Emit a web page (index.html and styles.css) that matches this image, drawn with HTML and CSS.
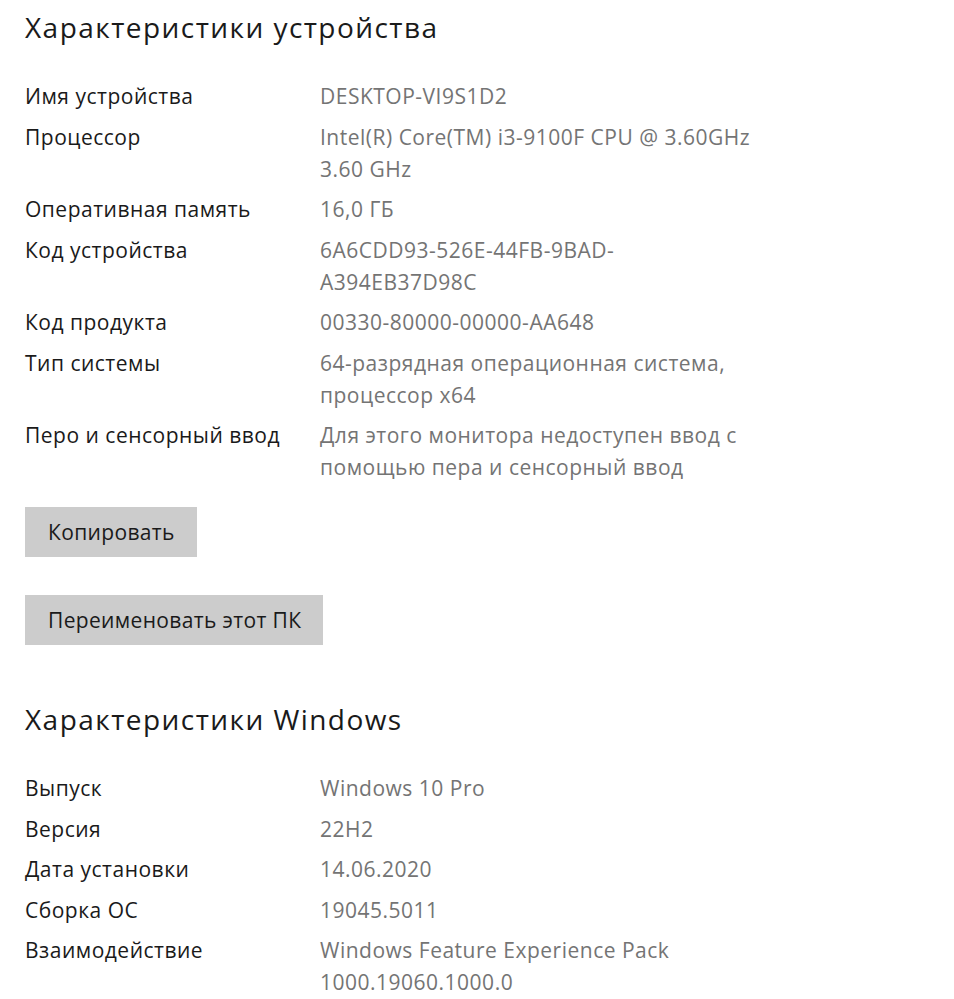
FILE: index.html
```html
<!DOCTYPE html>
<html lang="ru">
<head>
<meta charset="utf-8">
<title>О программе</title>
<link rel="stylesheet" href="styles.css">
</head>
<body>
<main class="page">
  <section class="section">
    <h1 class="title">Характеристики устройства</h1>
    <dl class="specs">
      <div class="row"><dt>Имя устройства</dt><dd>DESKTOP-VI9S1D2</dd></div>
      <div class="row"><dt>Процессор</dt><dd>Intel(R) Core(TM) i3-9100F CPU @ 3.60GHz<br>3.60 GHz</dd></div>
      <div class="row"><dt>Оперативная память</dt><dd>16,0 ГБ</dd></div>
      <div class="row"><dt>Код устройства</dt><dd>6A6CDD93-526E-44FB-9BAD-<br>A394EB37D98C</dd></div>
      <div class="row"><dt>Код продукта</dt><dd>00330-80000-00000-AA648</dd></div>
      <div class="row"><dt>Тип системы</dt><dd>64-разрядная операционная система,<br>процессор x64</dd></div>
      <div class="row"><dt>Перо и сенсорный ввод</dt><dd>Для этого монитора недоступен ввод с<br>помощью пера и сенсорный ввод</dd></div>
    </dl>
    <div class="actions">
      <button class="btn" type="button">Копировать</button>
      <button class="btn" type="button">Переименовать этот ПК</button>
    </div>
  </section>
  <section class="section section-windows">
    <h1 class="title">Характеристики Windows</h1>
    <dl class="specs">
      <div class="row"><dt>Выпуск</dt><dd>Windows 10 Pro</dd></div>
      <div class="row"><dt>Версия</dt><dd>22H2</dd></div>
      <div class="row"><dt>Дата установки</dt><dd>14.06.2020</dd></div>
      <div class="row"><dt>Сборка ОС</dt><dd>19045.5011</dd></div>
      <div class="row"><dt>Взаимодействие</dt><dd>Windows Feature Experience Pack<br>1000.19060.1000.0</dd></div>
    </dl>
  </section>
</main>
</body>
</html>
```

FILE: styles.css
```css
html, body {
  margin: 0;
  padding: 0;
  background: #ffffff;
}

body {
  font-family: "Open Sans", "Noto Sans", "Liberation Sans", sans-serif;
  color: #1a1a1a;
}

.page {
  padding: 7px 0 0 25px;
}

.title {
  margin: 0 0 33px 0;
  font-size: 28px;
  font-weight: 400;
  letter-spacing: 1.45px;
  line-height: 40px;
  color: #1a1a1a;
}

.section-windows {
  margin-top: 54px;
}

.specs {
  margin: 0;
  display: flex;
  flex-direction: column;
  gap: 8.5px;
}

.row {
  display: grid;
  grid-template-columns: 295px 1fr;
  font-size: 21px;
  letter-spacing: 0.5px;
  line-height: 32px;
}

.row dt {
  margin: 0;
  color: #1a1a1a;
}

.row dd {
  margin: 0;
  color: #747474;
}

.actions {
  margin-top: 24px;
  display: flex;
  flex-direction: column;
  align-items: flex-start;
  gap: 38px;
}

.btn {
  font-family: inherit;
  font-size: 21px;
  letter-spacing: 0.35px;
  color: #1a1a1a;
  background: #cccccc;
  border: none;
  border-radius: 0;
  height: 50px;
  padding: 0 22px 0 23px;
  margin: 0;
}
```
